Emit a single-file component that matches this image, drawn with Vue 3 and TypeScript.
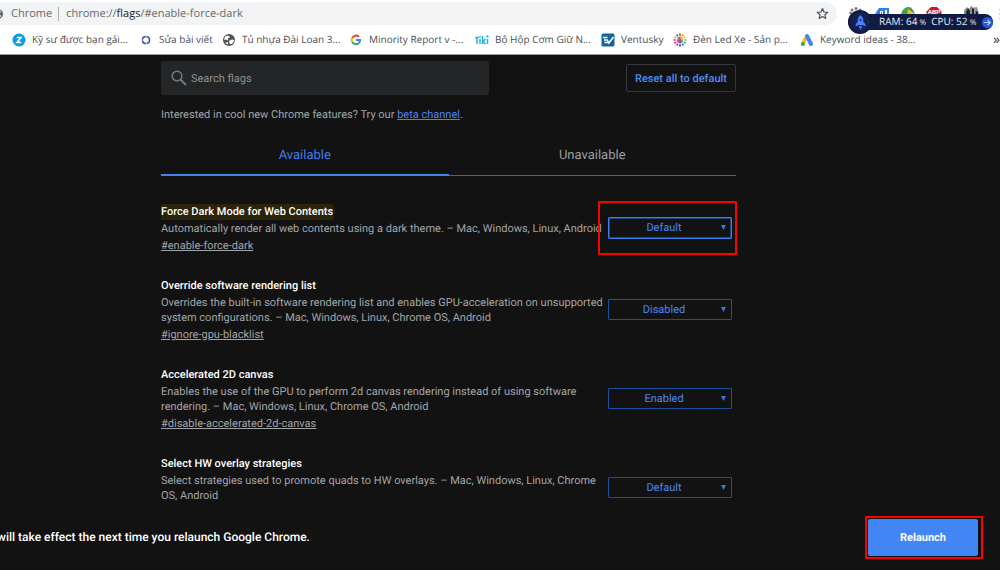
<script setup lang="ts">
import { ref } from 'vue'

interface Bookmark {
  icon: string
  label: string
}

interface Flag {
  id: string
  title: string
  description: string
  anchor?: string
  value: string
  highlighted?: boolean
}

const bookmarks: Bookmark[] = [
  { icon: 'zalo', label: 'Kỹ sư được bạn gái...' },
  { icon: 'ring', label: 'Sửa bài viết' },
  { icon: 'globe', label: 'Tủ nhựa Đài Loan 3...' },
  { icon: 'google', label: 'Minority Report v -...' },
  { icon: 'tiki', label: 'Bộ Hộp Cơm Giữ N...' },
  { icon: 'ventusky', label: 'Ventusky' },
  { icon: 'wheel', label: 'Đèn Led Xe - Sản p...' },
  { icon: 'ads', label: 'Keyword ideas - 38...' },
]

const flags = ref<Flag[]>([
  {
    id: 'force-dark',
    title: 'Force Dark Mode for Web Contents',
    description: 'Automatically render all web contents using a dark theme. – Mac, Windows, Linux, Android',
    anchor: '#enable-force-dark',
    value: 'Default',
    highlighted: true,
  },
  {
    id: 'gpu-list',
    title: 'Override software rendering list',
    description:
      'Overrides the built-in software rendering list and enables GPU-acceleration on unsupported system configurations. – Mac, Windows, Linux, Chrome OS, Android',
    anchor: '#ignore-gpu-blacklist',
    value: 'Disabled',
  },
  {
    id: 'canvas-2d',
    title: 'Accelerated 2D canvas',
    description:
      'Enables the use of the GPU to perform 2d canvas rendering instead of using software rendering. – Mac, Windows, Linux, Chrome OS, Android',
    anchor: '#disable-accelerated-2d-canvas',
    value: 'Enabled',
  },
  {
    id: 'overlay',
    title: 'Select HW overlay strategies',
    description: 'Select strategies used to promote quads to HW overlays. – Mac, Windows, Linux, Chrome OS, Android',
    value: 'Default',
  },
])

const options = ['Default', 'Enabled', 'Disabled']
const activeTab = ref<'available' | 'unavailable'>('available')
const query = ref('')
const spokes = [
  '#e8372c', '#f59b1c', '#f5d21c', '#7ac143', '#1ca5a0', '#2a6fdb',
  '#4a3fb5', '#9b3fb5', '#d63384', '#e8372c', '#f59b1c', '#2a6fdb',
]
</script>

<template>
  <div class="window">
    <header class="browser">
      <div class="toolbar">
        <div class="omnibox">
          <svg class="site-icon" viewBox="0 0 12 12" aria-hidden="true">
            <circle cx="6" cy="6" r="5" fill="#5f6368" />
            <path d="M6 4l3-1.500L8 6zM7 8l2-1v2z" fill="#f1f3f4" />
          </svg>
          <span class="origin">Chrome</span>
          <span class="url">chrome://<b>flags</b>/#enable-force-dark</span>
          <button class="star" type="button" aria-label="Bookmark this page">
            <svg viewBox="0 0 24 24">
              <path
                d="M12 2.800l2.800 6.400 7 .6-5.300 4.600 1.600 6.800-6.100-3.600-6.100 3.600 1.600-6.800L2.200 9.800l7-.6z"
                fill="none" stroke="#50545a" stroke-width="2.200" stroke-linejoin="round"
              />
            </svg>
          </button>
        </div>
        <div class="extensions">
          <svg viewBox="0 0 16 16" aria-hidden="true">
            <g fill="#75797d">
              <circle cx="4" cy="4" r="1.500" /><circle cx="8" cy="2.500" r="1.500" /><circle cx="12" cy="4" r="1.500" />
              <circle cx="2.500" cy="7" r="1.300" /><circle cx="13.500" cy="7" r="1.300" /><circle cx="8" cy="9" r="3.500" />
            </g>
          </svg>
          <svg viewBox="0 0 16 16" aria-hidden="true">
            <path d="M5 2h10v12H5L1 8z" fill="#2f7de9" />
            <path d="M6 5h3v5H6zM11 4h2v7h-2z" fill="#fff" />
            <path d="M7 6h1v2H7z" fill="#2f7de9" />
          </svg>
          <svg viewBox="0 0 16 16" aria-hidden="true">
            <circle cx="8" cy="8" r="6.500" fill="#3f7fc4" />
            <path d="M3 4q4-5 9-2L8 8 2 9z" fill="#46a447" />
            <path d="M8 3l6 4-2 6-5-1z" fill="#f0c419" />
          </svg>
          <svg viewBox="0 0 16 16" aria-hidden="true">
            <path d="M5 1h6l4.500 4.500v6L11 15H5L.5 11V5.500z" fill="#d31920" />
            <text x="8" y="8" text-anchor="middle" class="abp">ABP</text>
          </svg>
          <i class="divider"></i>
          <svg class="avatar" viewBox="0 0 18 18" aria-hidden="true">
            <path d="M2 5l3-3 2 2 2-3 3 2 3-1 2 7-1 8H2z" fill="#899099" />
            <path d="M4 7l2-4 2 3v6H4zM10 3l2 1v7h-2zM14 6l2 1v8h-3z" fill="#22262d" />
            <path d="M12 2l2 1v3h-2z" fill="#bd8e80" />
          </svg>
          <svg class="dots" viewBox="0 0 16 16" aria-hidden="true">
            <g fill="#4c5055"><circle cx="8" cy="3.500" r="1.300" /><circle cx="8" cy="8" r="1.300" /><circle cx="8" cy="12.500" r="1.300" /></g>
          </svg>
        </div>
        <div class="monitor">
          <span class="rocket">
            <svg viewBox="0 0 16 20" aria-hidden="true">
              <path d="M8 1c3 2 3.500 5 3.500 7v5h-7V8C4.500 6 5 3 8 1z" fill="#4a80ff" />
              <path d="M4.500 9L2 12v3l3-2M11.500 9l2.500 3v3l-3-2M6 14h1v3H6zM9 14h1v3H9zM7.500 14h1v5h-1z" fill="#4a80ff" />
              <circle cx="8" cy="7" r="1.200" fill="#12205a" />
            </svg>
          </span>
          <span>RAM: 64<small> %</small></span>
          <span>CPU: 52<small> %</small></span>
          <svg class="go" viewBox="0 0 14 14" aria-hidden="true">
            <circle cx="7" cy="7" r="6" fill="#2458dc" />
            <path d="M3 7h7M7 4l3 3-3 3" fill="none" stroke="#b7ceff" stroke-width="1.300" />
          </svg>
        </div>
      </div>

      <nav class="bookmarks" aria-label="Bookmarks">
        <a v-for="item in bookmarks" :key="item.label" href="#">
          <svg viewBox="0 0 14 14" aria-hidden="true">
            <template v-if="item.icon === 'zalo'">
              <circle cx="7" cy="7" r="6.500" fill="#0a9bdc" />
              <path d="M4.800 4.500h4.200L5 9.500h4.400" fill="none" stroke="#fff" stroke-width="1.600" />
            </template>
            <circle
              v-else-if="item.icon === 'ring'" cx="7" cy="7" r="3.600" fill="none" stroke="#40549a"
              stroke-width="1.500" stroke-dasharray="5 0.650"
            />
            <template v-else-if="item.icon === 'globe'">
              <circle cx="7" cy="7" r="6" fill="#505458" />
              <path d="M3 3.500l3-1 2 1.500-2 1.500v2L3.500 6.500 2 7zM8 7l3-.5 1.500 1L10 11H8L7 9zM3 10l3-1v2.500z" fill="#fff" />
            </template>
            <template v-else-if="item.icon === 'google'">
              <g fill="none" stroke-width="2">
                <path d="M10 3.800A4.300 4.300 0 0 0 3.200 5" stroke="#ea4335" />
                <path d="M3.200 5a4.300 4.300 0 0 0 0 4" stroke="#fbbc05" />
                <path d="M3.200 9a4.300 4.300 0 0 0 6.500 1.200" stroke="#34a853" />
                <path d="M9.700 10.200A4.300 4.300 0 0 0 11.200 7H7" stroke="#4285f4" />
              </g>
            </template>
            <path
              v-else-if="item.icon === 'tiki'"
              d="M0 4.500h4M2 4.500V11M5 6v5M5 3v1.500M7.500 3v8M10.500 6L8 8.500l2.500 2.500M12.500 6v5M11.500 4l1-1 1 1"
              fill="none" stroke="#1fb5ec" stroke-width="1.500"
            />
            <template v-else-if="item.icon === 'ventusky'">
              <rect x="0.500" y="0.500" width="13" height="13" rx="1.500" fill="#15659c" />
              <path d="M2 4.500h4.500M3 7h3M6 6.500l1.800 3.500L12.500 4M3.500 9.500h3" fill="none" stroke="#fff" stroke-width="1.500" />
            </template>
            <template v-else-if="item.icon === 'wheel'">
              <g v-for="(color, index) in spokes" :key="index" :transform="`rotate(${index * 30} 7 7)`">
                <path d="M7 0.500v2.200M7 3.800v1.700" :stroke="color" stroke-width="1.700" />
              </g>
              <circle cx="7" cy="7" r="1.200" fill="#e8372c" />
            </template>
            <template v-else>
              <path d="M6.800 3L3 10.500" stroke="#fbbc04" stroke-width="3.600" />
              <path d="M7 3l4 8" stroke="#4285f4" stroke-width="4" stroke-linecap="round" />
              <circle cx="2.800" cy="11" r="2.100" fill="#34a853" />
            </template>
          </svg>
          <span>{{ item.label }}</span>
        </a>
        <button type="button" aria-label="More bookmarks">»</button>
      </nav>
    </header>

    <main class="page">
      <div class="search-row">
        <label class="search">
          <svg viewBox="0 0 18 18" aria-hidden="true">
            <circle cx="7" cy="7" r="4.800" fill="none" stroke="#74777b" stroke-width="1.600" />
            <path d="M10.500 10.500l5.500 5.500" stroke="#74777b" stroke-width="2" />
          </svg>
          <input v-model="query" type="text" placeholder="Search flags" aria-label="Search flags" />
        </label>
        <button class="reset" type="button">Reset all to default</button>
      </div>

      <p class="promo">Interested in cool new Chrome features? Try our <a href="#">beta channel</a>.</p>

      <div class="tabs" role="tablist">
        <button
          type="button" role="tab" :aria-selected="activeTab === 'available'"
          :class="{ active: activeTab === 'available' }" @click="activeTab = 'available'"
        >Available</button>
        <button
          type="button" role="tab" :aria-selected="activeTab === 'unavailable'"
          :class="{ active: activeTab === 'unavailable' }" @click="activeTab = 'unavailable'"
        >Unavailable</button>
      </div>

      <section class="flags">
        <article v-for="flag in flags" :key="flag.id" class="flag" :class="{ highlighted: flag.highlighted }">
          <div class="info">
            <label class="title" :for="flag.id"><span>{{ flag.title }}</span></label>
            <p>{{ flag.description }}</p>
            <a :href="flag.anchor ?? '#'">{{ flag.anchor }}</a>
          </div>
          <div class="choice">
            <select :id="flag.id" v-model="flag.value">
              <option v-for="option in options" :key="option">{{ option }}</option>
            </select>
            <svg viewBox="0 0 6 6" aria-hidden="true"><path d="M0 0h6L3 6z" fill="#3478e8" /></svg>
          </div>
        </article>
      </section>
    </main>

    <footer class="restart">
      <span>will take effect the next time you relaunch Google Chrome.</span>
      <div class="frame"><button type="button">Relaunch</button></div>
    </footer>
  </div>
</template>

<style>
body {
  margin: 0;
  background: #121212;
}
</style>

<style scoped>
* {
  box-sizing: border-box;
}

.window {
  height: 100vh;
  display: flex;
  flex-direction: column;
  overflow: hidden;
  background: #121212;
  color: #a2a5a9;
  font: 11px/15px Roboto, sans-serif;
  text-rendering: geometricPrecision;
}

button,
input,
select {
  font: inherit;
  text-rendering: inherit;
  border: 0;
  padding: 0;
  margin: 0;
  background: none;
}

svg {
  display: block;
  flex: none;
}

.browser {
  flex: none;
  background: #fff;
  border-bottom: 1px solid #9a9a9a;
  color: #4b4f54;
  font-family: "Open Sans", "Noto Sans", sans-serif;
}

.toolbar {
  position: relative;
  display: flex;
  height: 25px;
  padding-top: 2px;
}

.omnibox {
  flex: 1;
  display: flex;
  align-items: center;
  height: 23px;
  background: #f1f3f4;
  border-radius: 0 12px 12px 0;
  font-size: 11px;
  color: #66696d;
}

.site-icon {
  width: 12px;
  height: 12px;
  margin-left: -8px;
}

.origin {
  margin-left: 7px;
  padding-right: 6px;
  border-right: 1px solid #a9acaf;
  line-height: 14px;
}

.url {
  margin-left: 7px;
}

.url b {
  font-weight: 400;
  color: #222;
}

.star {
  margin-left: auto;
  margin-right: 8px;
}

.star svg {
  width: 13px;
  height: 13px;
}

.extensions {
  width: 163px;
  flex: none;
  display: flex;
  align-items: center;
  gap: 10px;
  padding-left: 11px;
  overflow: hidden;
}

.extensions svg {
  width: 16px;
  height: 16px;
}

.extensions .avatar {
  width: 18px;
  height: 18px;
}

.extensions .dots {
  margin-left: 3px;
}

.abp {
  font: 700 6px "Liberation Sans", sans-serif;
  fill: #fff;
}

.divider {
  width: 1px;
  height: 14px;
  background: #c5c7c9;
}

.monitor {
  position: absolute;
  top: 14px;
  right: 7px;
  display: flex;
  align-items: center;
  gap: 5px;
  width: 145px;
  height: 16px;
  padding-right: 2px;
  border-radius: 8px;
  background: #101b43;
  color: #dfe3f0;
  font: 10px/12px "Noto Sans", sans-serif;
  white-space: nowrap;
}

.monitor small {
  font-size: 8px;
}

.rocket {
  display: grid;
  place-items: center;
  flex: none;
  width: 24px;
  height: 24px;
  margin-right: 2px;
  border-radius: 50%;
  background: #142150;
  border: 2px solid #101b43;
}

.rocket svg {
  width: 13px;
  height: 17px;
}

.go {
  width: 13px;
  height: 13px;
  margin-left: auto;
}

.bookmarks {
  display: grid;
  grid-template-columns: 127px 83px 127px 126px 126px 72px 127px 1fr auto;
  align-items: center;
  height: 29px;
  padding: 0 0 0 12px;
  font-size: 10px;
}

.bookmarks a {
  display: flex;
  align-items: center;
  gap: 6px;
  color: inherit;
  text-decoration: none;
  white-space: nowrap;
}

.bookmarks svg {
  width: 14px;
  height: 14px;
}

.bookmarks button {
  color: #333;
  font-size: 14px;
}

.page {
  flex: 1;
  min-height: 0;
  width: 100%;
  max-width: 746px;
  padding: 6px 10px 0 161px;
  overflow: hidden;
}

.search-row {
  display: flex;
  align-items: center;
  justify-content: space-between;
}

.search {
  display: flex;
  align-items: center;
  gap: 3px;
  width: 328px;
  height: 34px;
  padding-left: 9px;
  border-radius: 2px;
  background: #242527;
}

.search svg {
  width: 18px;
  height: 18px;
}

.search input {
  flex: 1;
  min-width: 0;
  color: #a2a5a9;
  outline: 0;
}

.search input::placeholder {
  color: #8e9195;
  opacity: 1;
}

.reset {
  height: 28px;
  padding: 0 8px;
  border: 1px solid #343639;
  border-radius: 2px;
  color: #4f8cf5;
  font-weight: 500;
}

.promo {
  margin: 12px 0 0;
}

.promo a {
  color: #4f7ff5;
}

.tabs {
  display: grid;
  grid-template-columns: 1fr 1fr;
  margin-top: 14px;
}

.tabs button {
  height: 40px;
  border-bottom: 1px solid #5d5f62;
  color: #9a9da1;
  font-size: 13px;
}

.tabs .active {
  border-bottom: 2px solid #4285e8;
  color: #3d7cf0;
}

.flags {
  display: grid;
  gap: 25px;
  padding-top: 28px;
}

.flag {
  display: flex;
  align-items: center;
  justify-content: space-between;
}

.info {
  width: 443px;
}

.title {
  display: block;
  height: 16px;
  color: #fff;
  font-weight: 500;
  line-height: 16px;
}

.highlighted .title span {
  display: inline-block;
  background: #2b2408;
}

.info p {
  margin: 1px 0 2px;
}

.info a {
  display: block;
  min-height: 15px;
  color: inherit;
}

.choice {
  position: relative;
  width: 124px;
  margin: 0 4px 2px 0;
}

.choice select {
  display: block;
  width: 100%;
  height: 21px;
  padding-right: 12px;
  appearance: none;
  border: 1px solid #1d4f9f;
  border-radius: 1px;
  outline: 0;
  background: #121212;
  color: #4d86f5;
  text-align: center;
  text-align-last: center;
}

.choice svg {
  position: absolute;
  top: 8px;
  right: 6px;
  width: 5px;
  height: 5px;
  pointer-events: none;
}

.highlighted select {
  height: 22px;
  border: 1px solid #3a80f0;
  box-shadow: inset 0 0 0 1px #1d4587;
}

.highlighted .choice::after {
  content: "";
  position: absolute;
  inset: -16px -5px -16px -10px;
  border: 2px solid #f00;
  border-radius: 1px;
  pointer-events: none;
}

.restart {
  flex: none;
  display: flex;
  align-items: center;
  justify-content: space-between;
  height: 68px;
  padding: 2px 17px 0 0;
  background: #121212;
  color: #fff;
  font-size: 12px;
  font-weight: 500;
}

.restart span {
  text-indent: -3px;
  white-space: nowrap;
}

.frame {
  padding: 1px 3px 1px 1px;
  border: 2px solid #f00;
  border-radius: 1px;
}

.restart button {
  display: block;
  width: 110px;
  height: 37px;
  border-radius: 2px;
  background: #4285f4;
  color: #fff;
  font-size: 11px;
  font-weight: 700;
}
</style>
